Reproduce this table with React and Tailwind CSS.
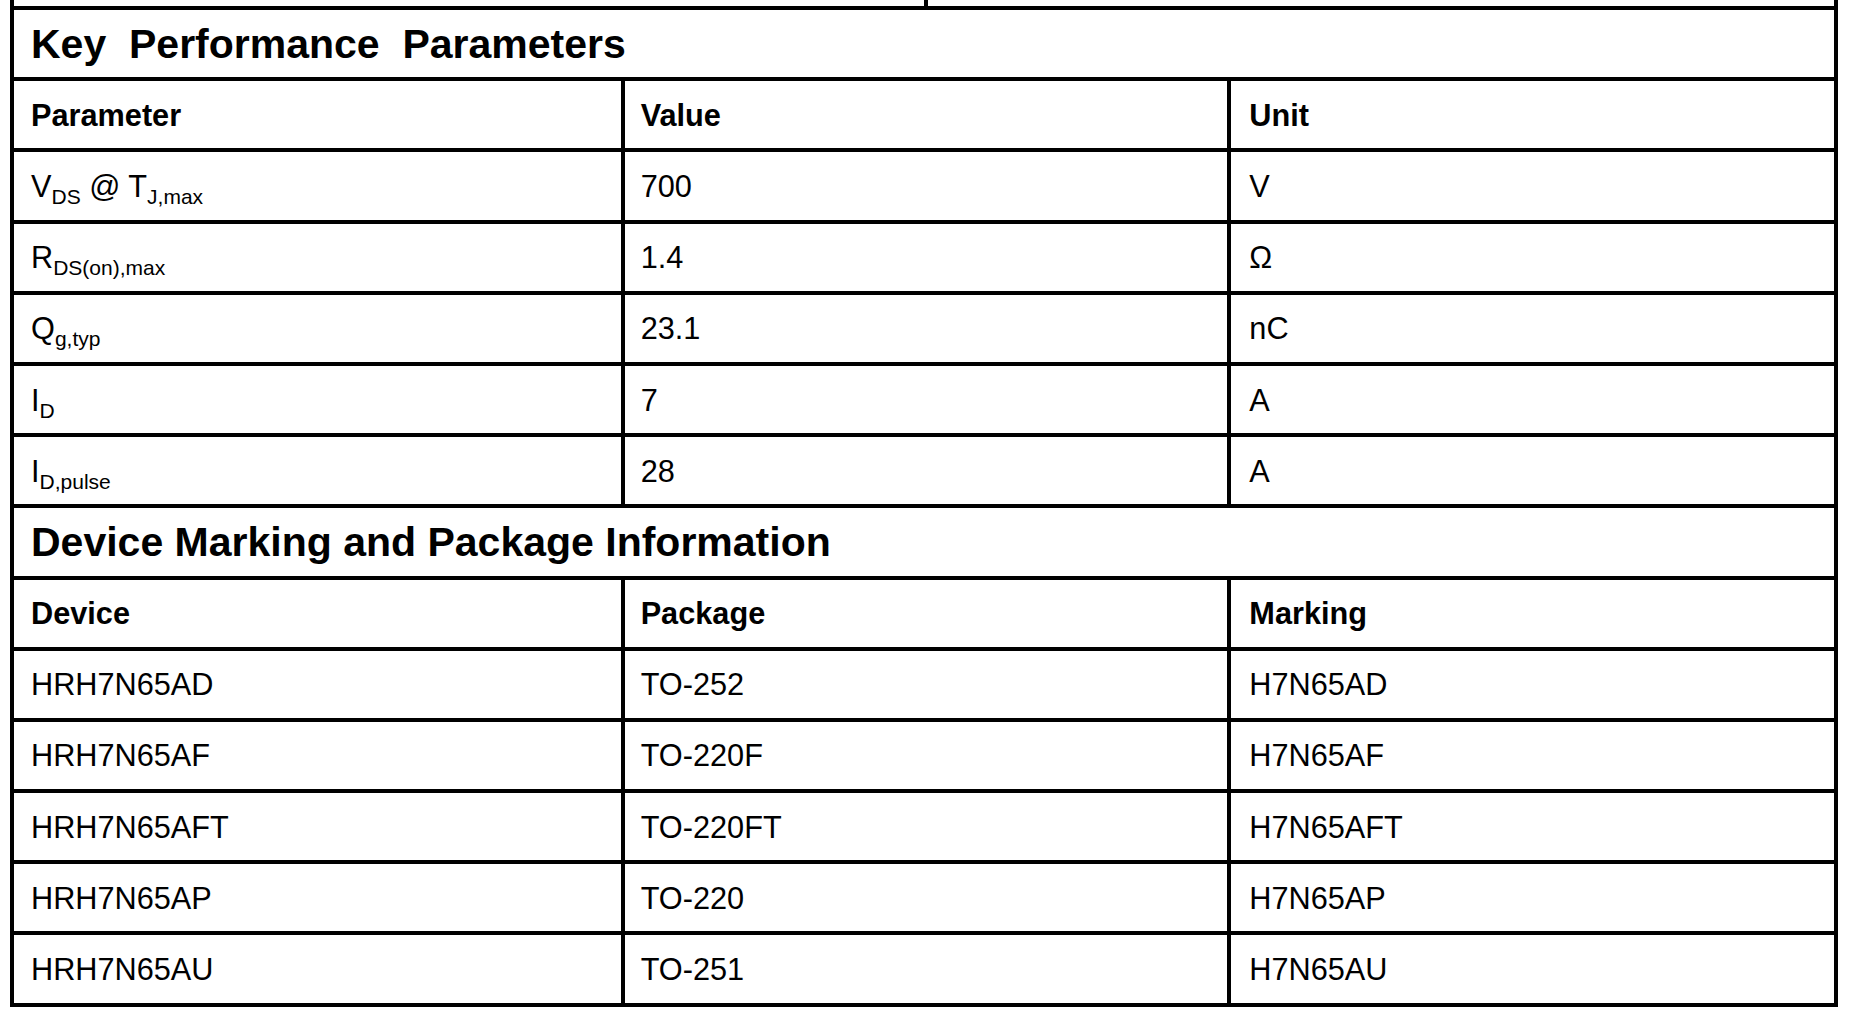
import React from "react";

const kpp = [
    { p: ["V", "DS", " @ T", "J,max"], v: "700", u: "V" },
    { p: ["R", "DS(on),max"], v: "1.4", u: "Ω" },
    { p: ["Q", "g,typ"], v: "23.1", u: "nC" },
    { p: ["I", "D"], v: "7", u: "A" },
    { p: ["I", "D,pulse"], v: "28", u: "A" },
];

const devices = [
    ["HRH7N65AD", "TO-252", "H7N65AD"],
    ["HRH7N65AF", "TO-220F", "H7N65AF"],
    ["HRH7N65AFT", "TO-220FT", "H7N65AFT"],
    ["HRH7N65AP", "TO-220", "H7N65AP"],
    ["HRH7N65AU", "TO-251", "H7N65AU"],
];

// alternating pieces: even index = normal text, odd index = subscript
const Param = ({ parts }) => (
    <span className="whitespace-pre">
        {parts.map((t, i) =>
            i % 2 === 0 ? (
                <span key={i}>{t}</span>
            ) : (
                <span key={i} className="relative top-[7px] text-[21px] leading-none">{t}</span>
            )
        )}
    </span>
);

const pad = ["pl-[17px]", "pl-4 border-l-4 border-black", "pl-[18px] border-l-4 border-black"];

const Cell = ({ i, bold, children }) => (
    <div className={`flex items-center pt-[2px] ${pad[i]} ${bold ? "font-bold" : ""}`}>
        {children}
    </div>
);

const Row = ({ cells, bold }) => (
    <div className="grid grid-cols-3 h-[71.2px] border-b-4 border-black">
        {cells.map((c, i) => (
            <Cell key={i} i={i} bold={bold}>{c}</Cell>
        ))}
    </div>
);

const Title = ({ children }) => (
    <div className="flex items-center h-[71.2px] border-b-4 border-black pl-[17px] pt-[2px] text-[41px] font-bold whitespace-pre">
        {children}
    </div>
);

export default function App() {
    return (
        <div className="w-[1850px] h-[1016px] bg-white text-black overflow-hidden" style={{ fontFamily: '"Liberation Sans", Arial, sans-serif' }}>
            {/* tail of the previous table */}
            <div className="ml-[10px] w-[1828px] h-[6px] grid grid-cols-2 border-x-4 border-black">
                <div />
                <div className="border-l-4 border-black" />
            </div>

            <div className="ml-[10px] w-[1828px] border-x-4 border-t-4 border-black text-[30.7px]">
                <Title>Key  Performance  Parameters</Title>
                <Row bold cells={["Parameter", "Value", "Unit"]} />
                {kpp.map((r, i) => (
                    <Row key={i} cells={[<Param parts={r.p} />, r.v, r.u]} />
                ))}

                <Title>Device Marking and Package Information</Title>
                <Row bold cells={["Device", "Package", "Marking"]} />
                {devices.map((d, i) => (
                    <Row key={i} cells={d} />
                ))}
            </div>
        </div>
    );
}
